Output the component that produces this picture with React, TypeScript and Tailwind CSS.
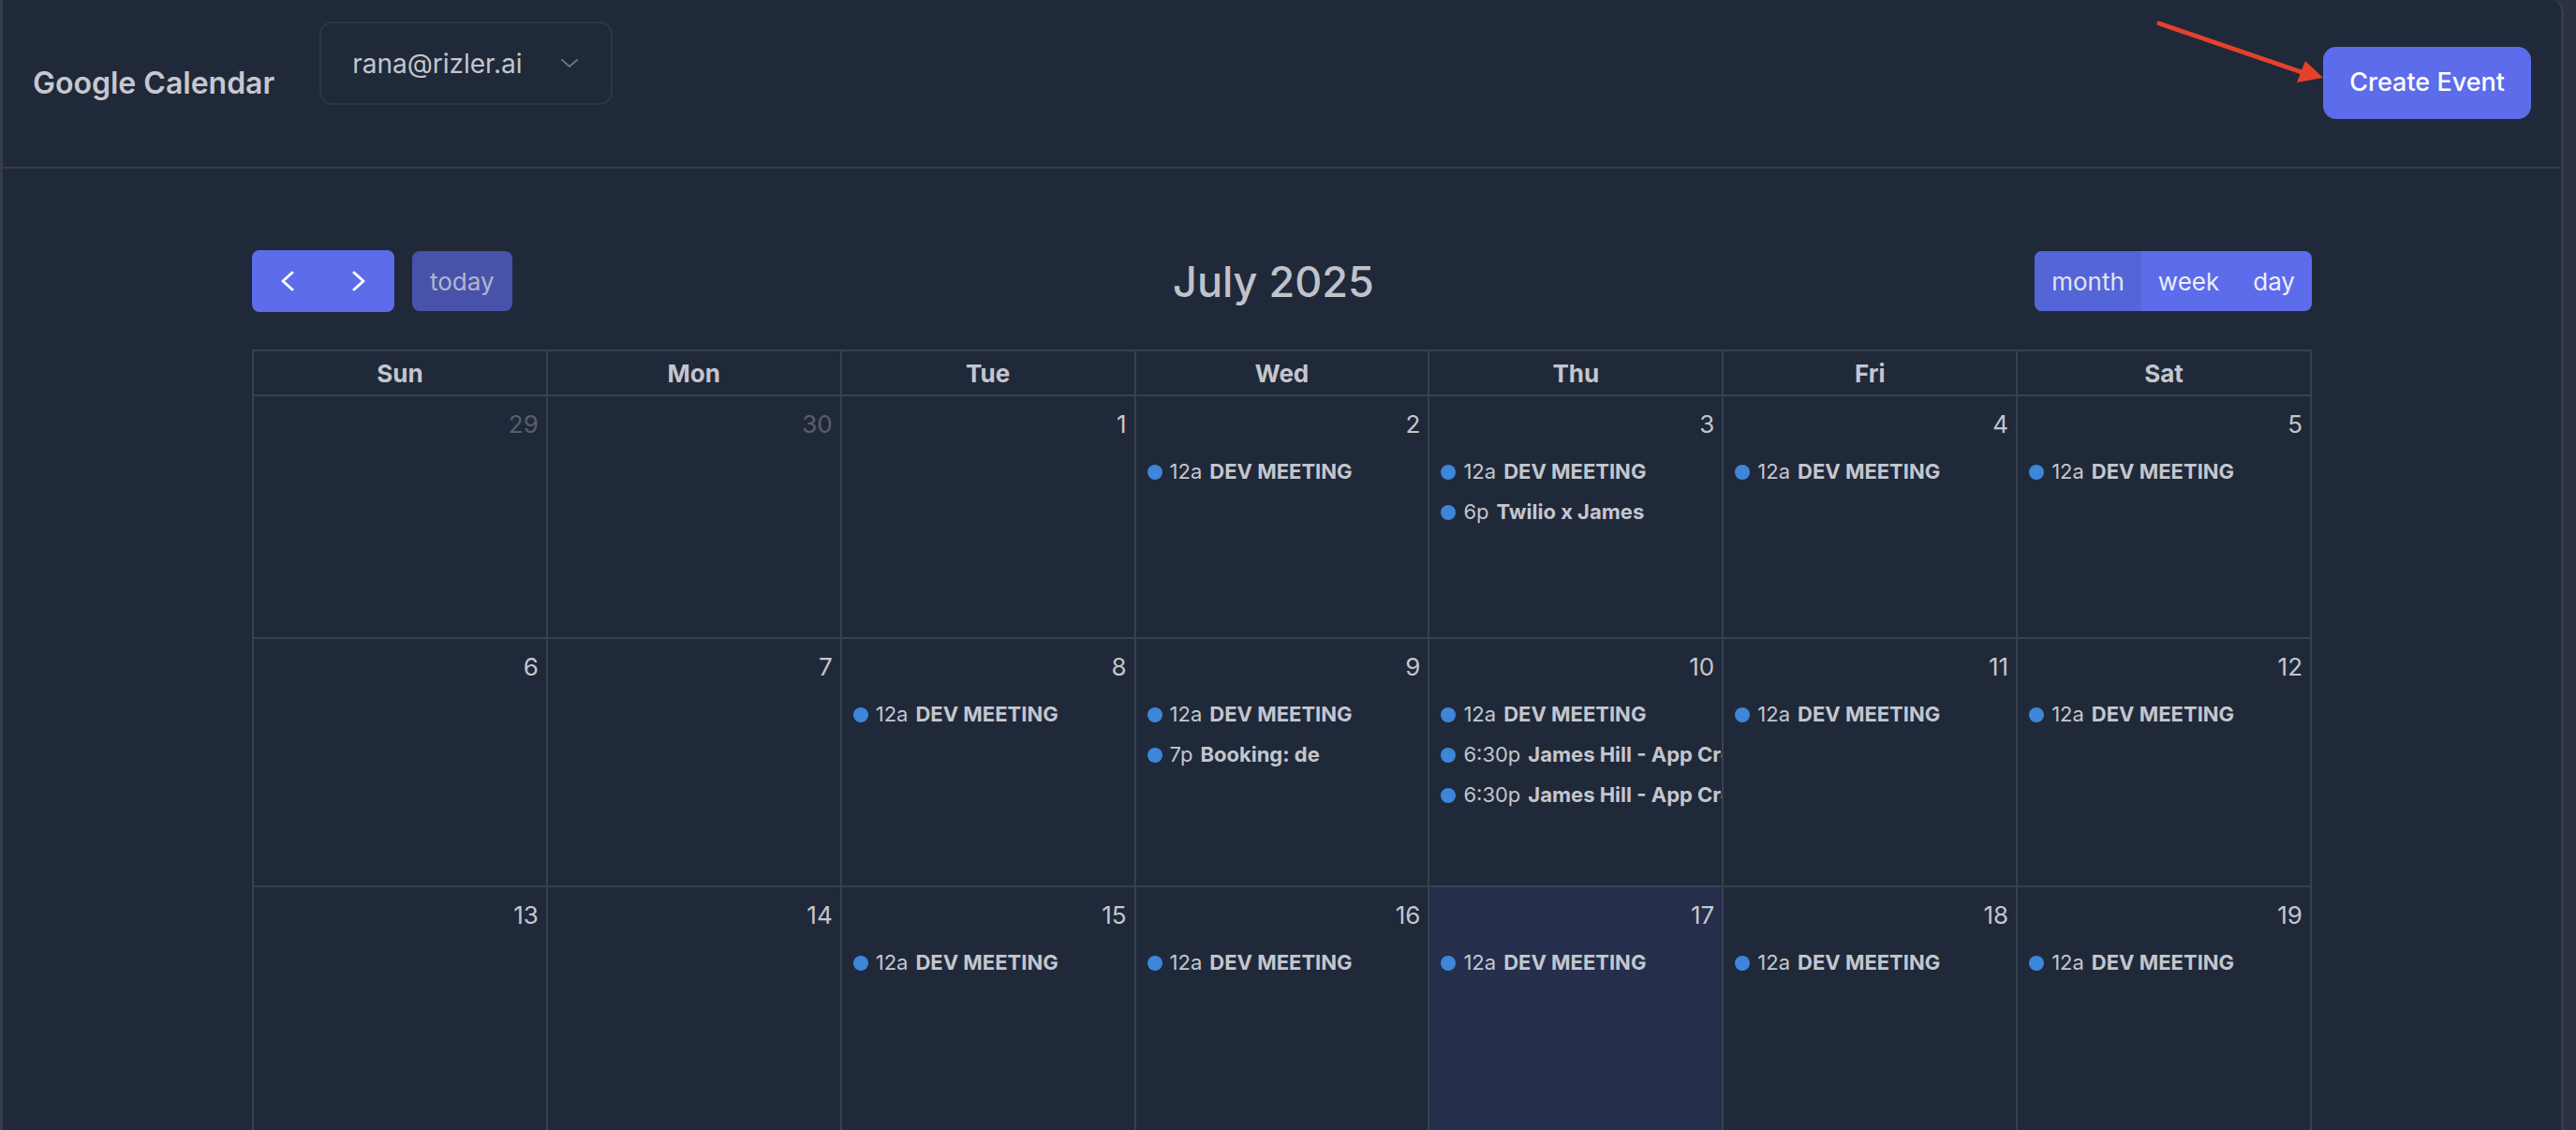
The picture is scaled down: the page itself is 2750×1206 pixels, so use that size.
import clsx from "clsx";

type CalEvent = { time: string; title: string };

const dayNames = ["Sun", "Mon", "Tue", "Wed", "Thu", "Fri", "Sat"];

// extra bookings on top of the daily dev meeting
const extra: Record<number, CalEvent[]> = {
  3: [{ time: "6p", title: "Twilio x James" }],
  9: [{ time: "7p", title: "Booking: de" }],
  10: [
    { time: "6:30p", title: "James Hill - App Creation Call" },
    { time: "6:30p", title: "James Hill - App Creation Call" },
  ],
};

const rowHeights = ["h-[259px]", "h-[265px]", "h-[262px]", "h-[262px]", "h-[262px]", "h-[262px]"];

function eventsFor(d: Date): CalEvent[] {
  if (d.getMonth() !== 6) return [];
  const list: CalEvent[] = [];
  if (d.getDate() > 1 && d.getDay() >= 2) list.push({ time: "12a", title: "DEV MEETING" });
  return [...list, ...(extra[d.getDate()] ?? [])];
}

function Chevron({ dir }: { dir: "left" | "right" }) {
  return (
    <svg width="16" height="22" viewBox="0 0 16 22" fill="none" stroke="currentColor" strokeWidth="3" strokeLinecap="round" strokeLinejoin="round">
      {dir === "left" ? <polyline points="13,2 3,11 13,20" /> : <polyline points="3,2 13,11 3,20" />}
    </svg>
  );
}

function Toolbar() {
  return (
    <div className="flex items-center justify-between mb-[40px]">
      <div className="flex items-center gap-[19px]">
        <div className="flex h-[66px] rounded-[8px] overflow-hidden bg-[#5c6cea] text-white">
          <button className="w-[76px] flex items-center justify-center">
            <Chevron dir="left" />
          </button>
          <button className="w-[76px] flex items-center justify-center">
            <Chevron dir="right" />
          </button>
        </div>
        <button className="h-[64px] px-[19px] rounded-[8px] bg-[#4752ab] text-[#b3b6cb] text-[26px]">today</button>
      </div>
      <h2 className="text-[45px] font-medium text-[#c0c2ca] leading-none">July 2025</h2>
      <div className="flex h-[64px] rounded-[8px] overflow-hidden bg-[#5c6cea] text-[26px] text-[#eceefb]">
        <button className="px-[18px] bg-[#5465d8] text-[#e2e4f2]">month</button>
        <button className="px-[18px]">week</button>
        <button className="px-[18px]">day</button>
      </div>
    </div>
  );
}

function MonthGrid() {
  const days = Array.from({ length: 42 }, (_, i) => new Date(2025, 5, 29 + i));

  return (
    <div className="border-l-2 border-t-2 border-[#394051]">
      <div className="grid grid-cols-7">
        {dayNames.map((n) => (
          <div key={n} className="h-[48px] border-r-2 border-b-2 border-[#394051] flex items-center justify-center text-[26px] font-bold text-[#c4c6ce]">
            {n}
          </div>
        ))}
      </div>
      <div className="grid grid-cols-7">
        {days.map((d, i) => {
          const inMonth = d.getMonth() === 6;
          const isToday = inMonth && d.getDate() === 17;
          return (
            <div
              key={i}
              className={clsx(
                "border-r-2 border-b-2 border-[#394051] overflow-hidden",
                rowHeights[Math.floor(i / 7)],
                isToday && "bg-[#252e4b]"
              )}
            >
              <div className={clsx("flex justify-end h-[58px] pt-[10px] pr-[8px] text-[26px] leading-[39px]", inMonth ? "text-[#c4c6ce]" : "text-[#595f6d]")}>
                {d.getDate()}
              </div>
              {eventsFor(d).map((e, j) => (
                <div key={j} className="flex items-center h-[43px] pt-[2px] pl-[12px] whitespace-nowrap text-[22px] text-[#c4c6ce]">
                  <span className="w-[16px] h-[16px] rounded-full bg-[#3d86d9] shrink-0 mr-[8px]" />
                  <span className="mr-[8px]">{e.time}</span>
                  <span className="font-bold">{e.title}</span>
                </div>
              ))}
            </div>
          );
        })}
      </div>
    </div>
  );
}

export default function App() {
  return (
    <div className="h-screen overflow-hidden flex bg-[#2a3244]" style={{ fontFamily: "Inter, 'Noto Sans', sans-serif" }}>
      <div className="flex-1 flex flex-col mr-[13px] bg-[#202939] border-l-[3px] border-r-[3px] border-[#343b4b] rounded-tr-[14px] overflow-hidden">
        {/* Header */}
        <header className="relative h-[180px] shrink-0 flex items-center px-[32px] border-b-2 border-[#343b4b]">
          <h1 className="text-[32px] font-semibold text-[#c6c8cf]">Google Calendar</h1>
          <button className="self-start mt-[23px] ml-[48px] h-[89px] w-[313px] flex items-center justify-between pl-[33px] pr-[34px] rounded-[14px] border-2 border-[#2e3646] text-[28px] text-[#c4c6cd]">
            <span>rana@rizler.ai</span>
            <svg width="20" height="11" viewBox="0 0 20 11" fill="none" stroke="#6b7180" strokeWidth="2" strokeLinecap="round" strokeLinejoin="round">
              <polyline points="2,2 10,9 18,2" />
            </svg>
          </button>
          <button className="ml-auto mt-[-2px] h-[77px] px-[28px] rounded-[14px] bg-[#5c6cea] text-white text-[27px] font-medium">Create Event</button>

          {/* annotation arrow */}
          <svg className="absolute left-[2299px] top-[20px] pointer-events-none" width="186" height="72" viewBox="0 0 186 72">
            <line x1="3" y1="5" x2="155" y2="57" stroke="#e5412d" strokeWidth="5" strokeLinecap="round" />
            <polygon points="178,63 150,68 159,45" fill="#e5412d" />
          </svg>
        </header>

        {/* Calendar */}
        <main className="flex-1 overflow-hidden pt-[87px]">
          <div className="max-w-[2199px] mx-auto">
            <Toolbar />
            <MonthGrid />
          </div>
        </main>
      </div>
    </div>
  );
}
